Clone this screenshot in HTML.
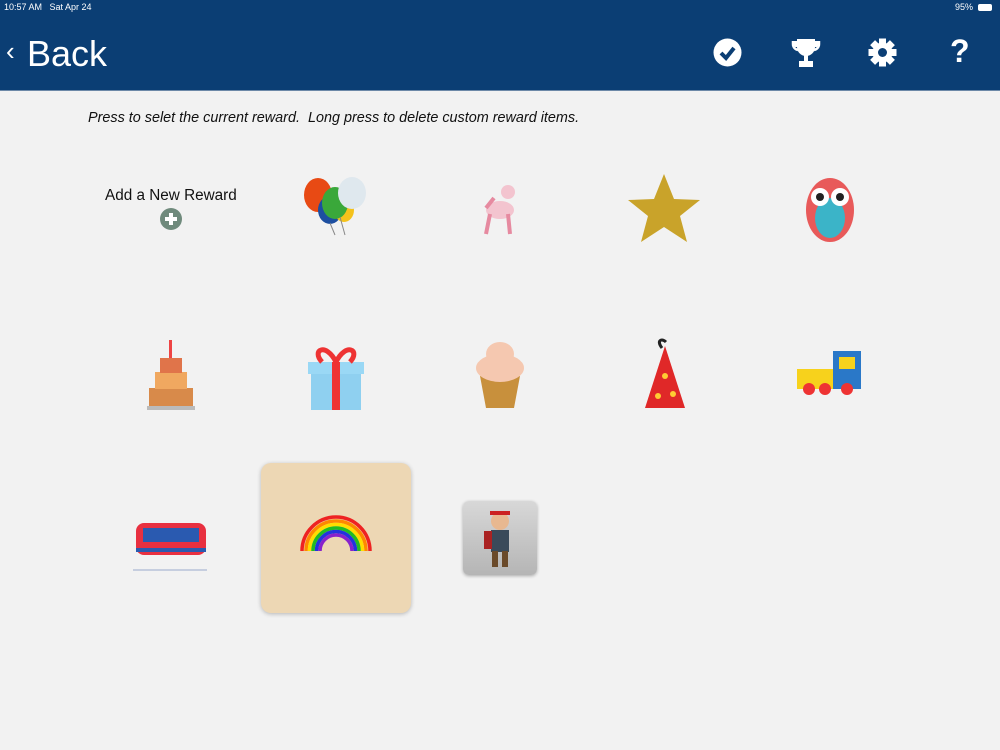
<!DOCTYPE html>
<html><head><meta charset="utf-8"><style>
body{margin:0;width:1000px;height:750px;background:#f2f2f2;font-family:"Liberation Sans",sans-serif;position:relative;overflow:hidden}
.hdr{position:absolute;left:0;top:0;width:1000px;height:90px;background:#0b3e74;border-bottom:1px solid #6d89a8}
.abs{position:absolute}
svg{position:absolute}
</style></head><body>
<div class="hdr"></div>
<div class="abs" style="left:4px;top:2px;color:#fff;font-size:9px">10:57 AM&nbsp;&nbsp; Sat Apr 24</div>
<div class="abs" style="left:955px;top:2px;color:#fff;font-size:9px">95%</div>
<div class="abs" style="left:978px;top:4px;width:14px;height:7px;background:#fff;border-radius:2px"></div>
<div class="abs" style="left:6px;top:36px;color:#fff;font-size:26px">‹</div>
<div class="abs" style="left:27px;top:33px;color:#fff;font-size:36px">Back</div>
<svg style="left:713px;top:38px" width="29" height="29" viewBox="0 0 29 29"><circle cx="14.5" cy="14.5" r="14" fill="#fff"/><path d="M8 15l5 5 8-10" stroke="#0b3e74" stroke-width="4" fill="none"/></svg>
<svg style="left:790px;top:38px" width="32" height="30" viewBox="0 0 32 30"><path d="M7 1h18v8a9 9 0 0 1-18 0z M3 3h4v6H5v-1H3z M25 3h4v5h-2v1h-2z" fill="#fff"/><path d="M3 3v3a6 6 0 0 0 5 6M29 3v3a6 6 0 0 1-5 6" stroke="#fff" stroke-width="2.5" fill="none"/><rect x="14" y="17" width="4" height="6" fill="#fff"/><rect x="9" y="23" width="14" height="6" fill="#fff"/></svg>
<svg style="left:868px;top:38px" width="29" height="29" viewBox="0 0 29 29"><g fill="#fff" transform="translate(14.5 14.5)"><circle r="10"/><rect x="-3.5" y="-14" width="7" height="28"/><rect x="-3.5" y="-14" width="7" height="28" transform="rotate(45)"/><rect x="-3.5" y="-14" width="7" height="28" transform="rotate(90)"/><rect x="-3.5" y="-14" width="7" height="28" transform="rotate(135)"/></g><circle cx="14.5" cy="14.5" r="4.5" fill="#0b3e74"/></svg>
<div class="abs" style="left:950px;top:33px;color:#fff;font-size:32px;font-weight:bold">?</div>
<div class="abs" style="left:88px;top:110px;font-size:14.4px;font-style:italic;color:#111">Press to selet the current reward.&nbsp; Long press to delete custom reward items.</div>
<div class="abs" style="left:105px;top:187px;font-size:15.3px;color:#111">Add a New Reward</div>
<svg style="left:159px;top:207px" width="24" height="24"><circle cx="12" cy="12" r="11" fill="#6f8a7c"/><path d="M12 6v12M6 12h12" stroke="#fff" stroke-width="4"/></svg>
<svg style="left:300px;top:175px" width="70" height="65"><ellipse cx="18" cy="20" rx="14" ry="17" fill="#e84a14"/><ellipse cx="30" cy="35" rx="12" ry="14" fill="#1d4fa0"/><ellipse cx="44" cy="35" rx="10" ry="12" fill="#f4c21c"/><ellipse cx="35" cy="28" rx="13" ry="16" fill="#3aa83a"/><ellipse cx="52" cy="18" rx="14" ry="16" fill="#dfe8ee"/><path d="M30 48l5 12M40 42l5 18" stroke="#888" fill="none"/></svg>
<svg style="left:472px;top:178px" width="56" height="60"><ellipse cx="28" cy="32" rx="14" ry="9" fill="#f3c4cf"/><circle cx="36" cy="14" r="7" fill="#f3c4cf"/><path d="M18 36l-4 20M36 36l2 20M22 20l-8 10" stroke="#e68aa0" stroke-width="4"/></svg>
<svg style="left:627px;top:172px" width="75" height="72"><polygon points="37,2 47,27 73,28 53,44 60,70 37,55 14,70 21,44 1,28 27,27" fill="#c9a32a"/></svg>
<svg style="left:803px;top:172px" width="54" height="74"><ellipse cx="27" cy="38" rx="24" ry="32" fill="#e85a5a"/><ellipse cx="27" cy="46" rx="15" ry="20" fill="#3bb4c8"/><circle cx="17" cy="25" r="9" fill="#fff"/><circle cx="37" cy="25" r="9" fill="#fff"/><circle cx="17" cy="25" r="4" fill="#222"/><circle cx="37" cy="25" r="4" fill="#222"/></svg>
<svg style="left:145px;top:338px" width="52" height="74"><rect x="4" y="50" width="44" height="20" fill="#d88a4a"/><rect x="10" y="34" width="32" height="17" fill="#f0a860"/><rect x="15" y="20" width="22" height="15" fill="#e0744a"/><rect x="24" y="2" width="3" height="18" fill="#e44"/><rect x="2" y="68" width="48" height="4" fill="#bbb"/></svg>
<svg style="left:305px;top:336px" width="62" height="76"><rect x="6" y="34" width="50" height="40" fill="#8fd0f0"/><rect x="3" y="26" width="56" height="12" fill="#9ad8f5"/><rect x="27" y="26" width="8" height="48" fill="#e33"/><path d="M31 26c-10-20-25-12-14 0M31 26c10-20 25-12 14 0" stroke="#e33" stroke-width="5" fill="none"/></svg>
<svg style="left:472px;top:336px" width="56" height="74"><path d="M8 40h40l-6 32H14z" fill="#c8903c"/><ellipse cx="28" cy="32" rx="24" ry="14" fill="#f5c8b0"/><ellipse cx="28" cy="18" rx="14" ry="12" fill="#f5c8b0"/></svg>
<svg style="left:640px;top:336px" width="50" height="75"><polygon points="25,10 45,72 5,72" fill="#e02828"/><path d="M22 12c-6-8 0-10 4-6" stroke="#222" stroke-width="3" fill="none"/><circle cx="25" cy="40" r="3" fill="#fc3"/><circle cx="18" cy="60" r="3" fill="#fc3"/><circle cx="33" cy="58" r="3" fill="#fc3"/></svg>
<svg style="left:795px;top:347px" width="70" height="50"><rect x="2" y="22" width="40" height="20" fill="#f7d21c"/><rect x="38" y="4" width="28" height="38" fill="#2a78c8"/><rect x="44" y="10" width="16" height="12" fill="#f7d21c"/><circle cx="14" cy="42" r="6" fill="#e33"/><circle cx="30" cy="42" r="6" fill="#e33"/><circle cx="52" cy="42" r="6" fill="#e33"/></svg>
<svg style="left:133px;top:518px" width="76" height="55"><rect x="3" y="5" width="70" height="32" rx="8" fill="#e83040"/><rect x="10" y="10" width="56" height="14" fill="#2a5ab0"/><rect x="3" y="30" width="70" height="4" fill="#2a5ab0"/><line x1="0" y1="52" x2="74" y2="52" stroke="#9ac" /></svg>
<div class="abs" style="left:261px;top:463px;width:150px;height:150px;background:#edd7b4;border-radius:10px;box-shadow:0 1px 4px rgba(0,0,0,.25)"></div>
<svg style="left:299px;top:515px" width="74" height="38"><g fill="none" stroke-width="3.5"><path d="M3 36a34 34 0 0 1 68 0" stroke="#e22"/><path d="M7 36a30 30 0 0 1 60 0" stroke="#f80"/><path d="M10.5 36a26.5 26.5 0 0 1 53 0" stroke="#fd0"/><path d="M14 36a23 23 0 0 1 46 0" stroke="#2b2"/><path d="M17.5 36a19.5 19.5 0 0 1 39 0" stroke="#23d"/><path d="M21 36a16 16 0 0 1 32 0" stroke="#82c"/></g></svg>
<div class="abs" style="left:463px;top:501px;width:74px;height:74px;border-radius:6px;background:linear-gradient(#d8d8d8,#b5b5b5);box-shadow:0 1px 3px rgba(0,0,0,.3)"></div>
<svg style="left:478px;top:505px" width="44" height="68"><circle cx="22" cy="16" r="9" fill="#e8b890"/><path d="M12 10h20v-4H12z" fill="#c22"/><rect x="13" y="25" width="18" height="22" fill="#3a4a5a"/><rect x="6" y="26" width="8" height="18" fill="#a22"/><rect x="14" y="46" width="6" height="16" fill="#6a4a2a"/><rect x="24" y="46" width="6" height="16" fill="#6a4a2a"/></svg>
</body></html>
